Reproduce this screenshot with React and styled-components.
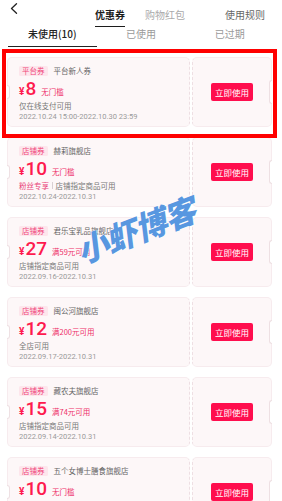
import React from 'react'
import styled, { createGlobalStyle } from 'styled-components'

const GlobalStyle = createGlobalStyle`
    html, body {
        margin: 0;
        padding: 0;
        background: #fff;
    }
    body {
        font-family: "Noto Sans CJK SC", "Noto Sans", sans-serif;
        -webkit-font-smoothing: antialiased;
    }
`

const RED = '#fe1a4e'

const coupons = [
    { type: '平台券', shop: '平台新人券', amount: '8', rule: '无门槛', desc: '仅在线支付可用', date: '2022.10.24 15:00-2022.10.30 23:59' },
    { type: '店铺券', shop: '赫莉旗舰店', amount: '10', rule: '无门槛', fans: '粉丝专享', desc: '店铺指定商品可用', date: '2022.10.24-2022.10.31' },
    { type: '店铺券', shop: '君乐宝乳品旗舰店', amount: '27', rule: '满59元可用', desc: '店铺指定商品可用', date: '2022.09.16-2022.10.31' },
    { type: '店铺券', shop: '闽公河旗舰店', amount: '12', rule: '满200元可用', desc: '全店可用', date: '2022.09.17-2022.10.31' },
    { type: '店铺券', shop: '藏农夫旗舰店', amount: '15', rule: '满74元可用', desc: '店铺指定商品可用', date: '2022.09.14-2022.10.31' },
    { type: '店铺券', shop: '五个女博士膳食旗舰店', amount: '10', rule: '无门槛', desc: '店铺指定商品可用', date: '2022.09.14-2022.10.31' },
]

const Page = styled.div`
    position: relative;
    width: 282px;
    height: 501px;
    overflow: hidden;
`

const TopBar = styled.div`
    display: flex;
    align-items: flex-start;
    height: 22px;
`

const BackBtn = styled.div`
    flex: 0 0 85px;
    padding: 3px 0 0 10px;
    box-sizing: border-box;
    svg { display: block; }
`

const TopTab = styled.div`
    flex: 0 0 ${({ $w }) => $w}px;
    text-align: center;
`

const TopLabel = styled.span`
    display: inline-block;
    font-size: 10px;
    line-height: 16px;
    padding-bottom: 3px;
    font-weight: ${({ $active }) => $active ? 700 : 400};
    color: ${({ $active, $tone }) => $active ? '#1c1c1c' : $tone};
    border-bottom: 1.5px solid ${({ $active }) => $active ? '#1c1c1c' : 'transparent'};
`

const SubTabs = styled.div`
    display: grid;
    grid-template-columns: repeat(3, 1fr);
    margin: 0 8px;
`

const SubTab = styled.div`
    text-align: center;
    font-size: 10px;
    line-height: 14px;
    padding: 5px 0 5px;
    font-weight: ${({ $active }) => $active ? 500 : 400};
    color: ${({ $active }) => $active ? '#222' : '#9a9a9a'};
    border-bottom: 1.5px solid ${({ $active }) => $active ? '#222' : 'transparent'};
`

const List = styled.div`
    display: flex;
    flex-direction: column;
    gap: 10px;
    padding: 10px 10px 0 7px;
`

const Card = styled.div`
    display: flex;
    gap: 2px;
    height: 70px;
`

const Main = styled.div`
    position: relative;
    flex: 1;
    box-sizing: border-box;
    padding: 8px 0 0 11px;
    background: #fdf7f8;
    border: 1px solid #f7ebee;
    border-right: 1px dashed #eedfe3;
    border-radius: 5px;

    &::before {
        content: "";
        position: absolute;
        left: -1px;
        top: 50%;
        transform: translateY(-50%);
        width: 2px;
        height: 12px;
        background: #fff;
        border: 1px solid #eee0e3;
        border-left: none;
        border-radius: 0 6px 6px 0;
    }
`

const Side = styled.div`
    position: relative;
    flex: 0 0 80px;
    box-sizing: border-box;
    display: flex;
    align-items: center;
    justify-content: center;
    background: #fdf7f8;
    border: 1px solid #f7ebee;
    border-left: 1px dashed #eedfe3;
    border-radius: 5px;

    &::after {
        content: "";
        position: absolute;
        right: -1px;
        top: 50%;
        transform: translateY(-50%);
        width: 2px;
        height: 22px;
        background: #fff;
        border: 1px solid #eee0e3;
        border-right: none;
        border-radius: 6px 0 0 6px;
    }
`

const HeadRow = styled.div`
    display: flex;
    align-items: center;
    height: 10px;
`

const Tag = styled.span`
    display: inline-block;
    height: 10px;
    line-height: 10px;
    padding: 0 3px;
    font-size: 7.5px;
    color: #f0457a;
    background: #fde6ec;
    border-radius: 1.5px;
`

const Shop = styled.span`
    margin-left: 6px;
    font-size: 7.5px;
    line-height: 10px;
    color: #666;
`

const PriceRow = styled.div`
    display: flex;
    align-items: baseline;
    height: 22px;
    margin-top: 2px;
    color: ${RED};
`

const Yen = styled.span`
    font-family: Roboto, "Liberation Sans", sans-serif;
    font-size: 10px;
    font-weight: 700;
`

const Amount = styled.span`
    margin-left: 1px;
    font-family: Roboto, "Liberation Sans", sans-serif;
    font-size: 19px;
    line-height: 22px;
    font-weight: 500;
`

const Rule = styled.span`
    margin-left: 5px;
    font-size: 7.5px;
    color: #ee3068;
`

const Line = styled.div`
    display: flex;
    align-items: center;
    height: 11px;
    font-size: 7.5px;
    line-height: 11px;
    color: ${({ $muted }) => $muted ? '#9a9a9a' : '#777'};
    font-family: ${({ $muted }) => $muted ? 'Roboto, "Noto Sans CJK SC", sans-serif' : 'inherit'};
`

const Fans = styled.span`
    color: #e9457a;
`

const Divider = styled.span`
    width: 0.5px;
    height: 7px;
    margin: 0 3px;
    background: #d9d0d2;
`

const UseBtn = styled.button`
    height: 18px;
    padding: 0 4px;
    border: none;
    border-radius: 2px;
    background: #ff0e4e;
    color: #fff;
    font-family: inherit;
    font-size: 8.5px;
    line-height: 18px;
    cursor: pointer;
`

const Highlight = styled.div`
    position: absolute;
    left: 2px;
    top: 49px;
    width: 275px;
    height: 89px;
    box-sizing: border-box;
    border: 4px solid #ff0000;
    pointer-events: none;
`

const Watermark = styled.div`
    position: absolute;
    left: 70px;
    top: 209px;
    width: 130px;
    text-align: center;
    font-family: "Noto Sans CJK SC", sans-serif;
    font-size: 32px;
    line-height: 40px;
    font-weight: 900;
    font-style: italic;
    letter-spacing: -1px;
    color: #5897e0;
    text-shadow: 0 0 1px #fff, 0 0 2px #fff;
    transform: rotate(-21deg);
    pointer-events: none;
    white-space: nowrap;
`

function Coupon({ c }) {
    return (
        <Card>
            <Main>
                <HeadRow>
                    <Tag>{c.type}</Tag>
                    <Shop>{c.shop}</Shop>
                </HeadRow>
                <PriceRow>
                    <Yen>¥</Yen>
                    <Amount>{c.amount}</Amount>
                    <Rule>{c.rule}</Rule>
                </PriceRow>
                <Line>
                    {c.fans && <><Fans>{c.fans}</Fans><Divider /></>}
                    {c.desc}
                </Line>
                <Line $muted>{c.date}</Line>
            </Main>
            <Side>
                <UseBtn>立即使用</UseBtn>
            </Side>
        </Card>
    )
}

export default function App() {
    return (
        <Page>
            <GlobalStyle />
            <TopBar>
                <BackBtn>
                    <svg width="8" height="11" viewBox="0 0 8 11">
                        <polyline points="6.5,0.8 1.5,5.5 6.5,10.2" fill="none" stroke="#222" strokeWidth="1.3" strokeLinecap="round" strokeLinejoin="round" />
                    </svg>
                </BackBtn>
                <TopTab $w={50}><TopLabel $active>优惠券</TopLabel></TopTab>
                <TopTab $w={60}><TopLabel $tone="#aaa">购物红包</TopLabel></TopTab>
                <TopTab $w={100}><TopLabel $tone="#666">使用规则</TopLabel></TopTab>
            </TopBar>
            <SubTabs>
                <SubTab $active>未使用(10)</SubTab>
                <SubTab>已使用</SubTab>
                <SubTab>已过期</SubTab>
            </SubTabs>
            <List>
                {coupons.map((c, i) => <Coupon key={i} c={c} />)}
            </List>
            <Highlight />
            <Watermark>小虾博客</Watermark>
        </Page>
    )
}
